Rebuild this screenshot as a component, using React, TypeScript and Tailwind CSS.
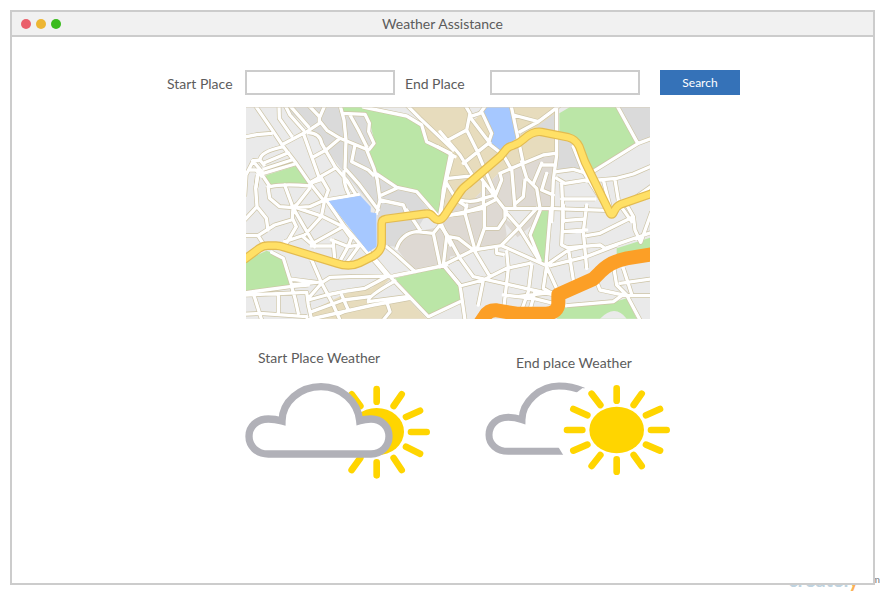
const SHEETS = {
  northWest: 'translate(-18 -21)',
  northEast: 'translate(582 -21)',
  west: 'translate(-9 204)',
  southWest: 'translate(-18 294)',
  southEast: 'translate(582 294)',
};

type Area = { at: string; fill: string; d: string };

const GREEN = '#bbe6a7';
const BLUE = '#a6c8ff';
const SAND = '#e7dcbd';
const GREY = '#dadada';
const STONE = '#ded9d3';
const LAND = '#eaeaea';

const areas: Area[] = [
  { at: SHEETS.northWest, fill: GREY, d: 'M130 21H302L380 40L405 130L387 155L410 212L520 270L570 335L430 360L310 215L260 150L215 90Z' },
  { at: SHEETS.northWest, fill: SAND, d: 'M505 21H640V360H600V345L630 162L562 125L550 60Z' },
  { at: SHEETS.northWest, fill: GREEN, d: 'M302 21H370L500 48L545 75L560 127L632 162L605 260L600 345L580 325L530 275L470 262L405 210L387 155L405 130L385 50L375 40L308 35Z' },
  { at: SHEETS.northWest, fill: GREEN, d: 'M72 237L80 225L170 197L210 257L95 255L85 258Z' },
  { at: SHEETS.northEast, fill: SAND, d: 'M0 21H350V160L180 215L100 300L0 370Z' },
  { at: SHEETS.northEast, fill: STONE, d: 'M180 215L345 160L340 320L200 440L0 475V340L100 300Z' },
  { at: SHEETS.northEast, fill: LAND, d: 'M90 21H135L120 45L90 70Z' },
  { at: SHEETS.northEast, fill: BLUE, d: 'M137 21H210L228 115L180 160L147 135L155 100L127 45Z' },
  { at: SHEETS.northEast, fill: GREY, d: 'M290 80L352 35V215L430 215L400 130L300 95Z' },
  { at: SHEETS.northEast, fill: GREEN, d: 'M358 40L390 21H527L588 128L455 215L420 140L400 110L358 95Z' },
  { at: SHEETS.northEast, fill: GREY, d: 'M540 21H630V118L595 125Z' },
  { at: SHEETS.northEast, fill: GREEN, d: 'M0 150L38 165L10 290L0 345Z' },
  { at: SHEETS.southWest, fill: GREY, d: 'M412 20L500 5L560 25L530 75L470 125L437 122L412 130Z' },
  { at: SHEETS.southWest, fill: STONE, d: 'M470 130Q485 85 530 80L600 65L630 30V180L520 198Z' },
  { at: SHEETS.southWest, fill: GREEN, d: 'M560 0H608V28L595 35L570 20Z' },
  { at: SHEETS.southWest, fill: GREEN, d: 'M18 165L80 137L125 155L150 240L50 258L18 260Z' },
  { at: SHEETS.southWest, fill: SAND, d: 'M210 318L320 265L395 250L425 223H450L385 280V292L500 278L560 341H210Z' },
  { at: SHEETS.southWest, fill: GREEN, d: 'M465 220L610 185L660 245V285L565 330Z' },
  { at: SHEETS.southEast, fill: LAND, d: 'M195 55L290 160L185 120L200 90ZM200 45L240 70L290 15H200Z' },
  { at: SHEETS.southEast, fill: GREEN, d: 'M300 17H328L318 178L300 165L270 95Z' },
  { at: SHEETS.southEast, fill: GREEN, d: 'M530 130L630 98V140L530 158Z' },
  { at: SHEETS.southEast, fill: GREEN, d: 'M370 308L520 292L560 280L590 341H350Z' },
  { at: SHEETS.southEast, fill: LAND, d: 'M480 341Q525 295 560 341Z' },
];

const roads = [
  {
    at: SHEETS.northWest,
    d: `M45 15L100 95L130 140L165 185L210 250L250 300M117 15L118 55L155 108M135 15L150 45L190 90
M10 112L50 104L95 100M148 15L205 80M205 15L238 50V70L205 92L130 132M255 15L240 50M238 62L262 92L300 115L385 150
M300 15L312 60L318 120L315 205L355 250L415 330M308 40L375 43L388 70L386 95L402 130L388 148M330 45L355 90L380 140
M190 100L215 170L240 240M205 98Q240 100 245 130L262 160L285 200L320 240L345 280M300 115L258 150L218 172
M345 135L335 185L385 210L400 225M380 150L402 205L412 240L420 300L410 340M285 205L215 245
M130 140Q60 155 60 180L40 182L18 225L14 290M60 180L72 195M70 190L145 158M72 207L155 180M38 182L70 220L165 192
M65 228L48 210L30 210M70 230L90 260Q130 250 210 258M52 225L48 262M245 235L265 270L255 298M210 250L245 238
M312 215Q310 250 325 280M410 222L470 262L530 275L600 355M425 285L470 265M420 300L490 315L500 340M258 300L355 284
M370 21L500 48L545 75L560 125L632 160M500 15L540 55L640 150M632 160L610 270L602 350`,
  },
  {
    at: SHEETS.northEast,
    d: `M75 15L90 40L80 90L25 120M0 95L60 165L100 230M90 50L120 40L138 15M95 58L150 130M127 40L155 100L145 130L190 165L215 210
M80 90L110 150L165 280M145 130L70 190M25 235L120 225M38 170L20 235L0 340M-8 140L45 170M213 15L235 120L250 190
M220 45L295 65L335 35L360 15M350 15V165L340 240L335 365M240 95L295 65M180 220L250 190L310 165L345 160
M245 185L260 235L290 265L300 325M215 205L225 325M255 240L250 290L225 312M180 220L185 240L165 290M130 245V320
M120 230L165 290M60 300Q100 310 130 295L165 285M305 190L280 250M305 195L340 195M320 220L305 270L340 285M20 250L50 300L80 320
M30 345L80 335L130 318L165 300M165 290L200 335M350 215L400 208L440 220
M350 235L375 250L440 240M365 250L370 365M365 297H465M455 217L595 130L635 115M530 15L592 128
M440 243L530 235L580 222L635 198M490 240L510 320M525 240L535 300M400 140L430 215L510 340M635 258L590 290M540 315L575 365`,
  },
  {
    at: SHEETS.west,
    d: `M45 0L38 40L42 95L70 130L75 165M42 95L5 135M5 182H45L60 205M45 182L95 150L145 135M75 35L80 70L110 95L150 98
M125 30L150 98M200 40L165 85L150 98L148 130L160 155L130 205M150 98L180 150L215 210M160 98L240 125L300 155
M155 98L200 95L245 75M245 75L235 125L185 180L125 200M250 75L305 155L375 235L430 300M300 155L210 205
M180 185L215 215M205 213H270M270 195L275 250M265 195L315 215L350 210M300 155L325 190L315 215L290 260M350 210L310 265`,
  },
  {
    at: SHEETS.southWest,
    d: `M500 15L540 75M95 142L130 160L155 240L250 230L270 217L330 215L460 213L620 180
M150 222L230 232M215 165L245 235L280 300L300 345M10 264L150 245L205 240M205 280L240 240M155 245L165 280L175 325
M40 265L65 345M115 268V325M10 328L60 325L200 335M18 270L200 262L205 300L215 345M205 285L260 270L320 258L375 250L440 215
M215 320L310 285L390 275M305 270L325 315L300 325M385 290L500 275M200 345L400 300L510 280M440 290L450 320L430 345
M385 290Q380 275 465 228M450 215L565 335L660 290M440 125L470 150L525 200M470 130Q485 85 530 80L580 85L600 180
M600 60L580 85M605 60L632 120M610 180L660 240M385 138L450 215`,
  },
  {
    at: SHEETS.southEast,
    d: `M20 95L10 180L60 240L75 345M0 60L25 95L55 100L100 135M25 95L60 160M30 30L75 25L80 0M75 25L105 135M80 20L130 10M133 0V70L110 135
M133 70L175 70L195 40V10M200 25L235 65L300 170M290 10L235 70L185 120M0 185L100 135L185 122L320 182L310 250L345 270
M195 10L340 11L500 16M300 17L270 90L300 165M332 10L318 180M60 243L130 225L200 190L270 175M60 160L100 215L345 270
M105 140L150 215M200 140L205 190L190 320M115 300L130 225M275 180L265 260L245 315M190 270L280 280L340 295M285 260L270 315
M170 130V145L190 148M320 185L352 255M320 180L385 135L430 125M370 0L365 120L385 130L400 225M440 0L430 80L440 190M370 80L440 75
M370 47L435 42M385 128L480 120L495 130L635 82M330 182L440 155L530 120M440 92L480 85L580 35M560 0L580 35L585 75L602 112L635 20
M380 302L520 290L545 272L632 272M470 230L480 255L550 270M520 180L530 240L560 270L600 345M550 190L575 268M540 235L632 222M230 275L340 262`,
  },
];

const lake = 'M257 78L352 62L383 95V112L400 115L401 215L376 231L305 140Z';
const freeway =
  'M-6 458L40 424Q52 416 66 416H90Q100 416 115 421L272 469Q310 482 340 468L382 447Q407 432 407 408V350Q407 338 419 336L540 320Q552 318 560 328Q580 352 598 322L640 258Q648 244 665 232L762 149L782 125Q790 118 802 115Q818 110 832 97Q862 70 887 75L967 91Q990 97 1000 119L1017 165L1090 314Q1097 330 1104 314Q1110 298 1124 292L1225 257';
const motorway = 'M698 655L716 628Q728 608 752 610L812 620H902Q937 616 937 588V563L1042 516L1062 496Q1092 464 1142 454L1225 441';

function CityMap() {
  return (
    <svg viewBox="0 0 1212 636" className="block w-full" role="img" aria-label="Route map" fill="none" strokeLinejoin="round">
      <rect width="1212" height="636" fill={LAND} />
      {areas.map((a) => (
        <path key={a.at + a.d} transform={a.at} fill={a.fill} d={a.d} />
      ))}
      {roads.map((r) => (
        <path key={r.at} transform={r.at} d={r.d} stroke="#cdc4a6" strokeWidth="14" />
      ))}
      {roads.map((r) => (
        <path key={r.at} transform={r.at} d={r.d} stroke="#fff" strokeWidth="10" strokeLinecap="round" />
      ))}
      <path transform={SHEETS.west} d={lake} fill={BLUE} />
      <path d={freeway} stroke="#e3bb50" strokeWidth="26" />
      <path d={freeway} stroke="#ffe066" strokeWidth="19" />
      <path d={motorway} stroke="#fc9f26" strokeWidth="42" />
      <path d="M0 1H1212" stroke="#d6d0c0" strokeWidth="2" />
    </svg>
  );
}

function CloudOverSun() {
  return (
    <svg viewBox="30 123 555 297" className="block w-[185px]" role="img" aria-label="Mostly cloudy" fill="none">
      <ellipse cx="425" cy="275" rx="82" ry="71" fill="#ffd500" />
      <path
        stroke="#ffd500"
        strokeWidth="20"
        strokeLinecap="round"
        d="M425 147V185M500 163L476 198M555 212L513 231M528 276H575M513 320L555 341M476 354L500 390M425 367V406M376 354L350 390M350 163L376 198"
      />
      <path
        fill="#fff"
        stroke="#b1b1b8"
        strokeWidth="22"
        strokeMiterlimit="10"
        d="M141 243Q120 237 100 237C65 237 42 260 42 289C42 318 65 342 100 342H408C440 342 462 318 462 289C462 260 440 237 408 237Q390 237 374 242C368 185 320 140 258 140C195 140 142 185 141 243Z"
      />
    </svg>
  );
}

function SunWithCloud() {
  return (
    <svg viewBox="30 123 555 297" className="block w-[185px]" role="img" aria-label="Mostly sunny" fill="none">
      <path
        stroke="#b1b1b8"
        strokeWidth="21"
        strokeMiterlimit="10"
        d="M275 334H100C65 334 42 312 42 285C42 255 65 232 100 232Q120 232 141 239C142 185 195 138 252 138Q290 138 325 153"
      />
      <path fill="#fff" d="M323 144L303 159L320 180L345 150ZM250 321L266 347H290V321Z" />
      <ellipse cx="425" cy="270" rx="82" ry="70" fill="#ffd500" />
      <path
        stroke="#ffd500"
        strokeWidth="20"
        strokeLinecap="round"
        d="M425 145V182M500 161L476 195M555 207L513 226M528 270H575M513 314L555 332M476 345L500 378M425 358V395M376 345L350 378M337 314L295 332M322 270H276M337 226L295 207M376 195L350 161"
      />
    </svg>
  );
}

export default function App() {
  return (
    <div className="relative flex min-h-screen bg-white p-[10px] font-['Lato',sans-serif] text-sm text-[#5c5c5c]">
      <div className="absolute right-[5px] bottom-1 flex items-start" aria-hidden="true">
        <span className="text-xl leading-6 font-bold text-[#bfd3e0]">
          createl<span className="text-[#fbb154]">y</span>
        </span>
        <span className="text-[10px] leading-6 text-[#777]">.com</span>
      </div>
      <main className="relative flex-1 border-2 border-[#ccc] bg-white">
        <header className="relative flex h-[25px] items-center justify-center border-b-2 border-[#ccc] bg-[#f1f1f1]">
          <div className="absolute left-[9px] flex gap-[5px]">
            <span className="size-[10px] rounded-full bg-[#ea5f6b]" />
            <span className="size-[10px] rounded-full bg-[#edb633]" />
            <span className="size-[10px] rounded-full bg-[#3abb1c]" />
          </div>
          <h1>Weather Assistance</h1>
        </header>

        <div className="mx-auto w-[595px] pt-[33px] pl-[22px]">
          <form className="flex items-center" onSubmit={(e) => e.preventDefault()}>
            <label htmlFor="start" className="w-[78px] pt-[2px]">Start Place</label>
            <input id="start" type="text" className="h-[25px] w-[150px] border-2 border-[#ccc] bg-white px-1 outline-none" />
            <label htmlFor="end" className="ml-[10px] w-[85px] pt-[2px]">End Place</label>
            <input id="end" type="text" className="h-[25px] w-[150px] border-2 border-[#ccc] bg-white px-1 outline-none" />
            <button type="submit" className="ml-5 h-[25px] w-20 bg-[#3572b8] text-xs text-white">Search</button>
          </form>

          <div className="mt-3 ml-[79px] w-[404px]">
            <CityMap />
          </div>

          <div className="mt-7 ml-[78px] flex gap-[55px]">
            <section>
              <h2 className="pb-3 pl-[13px] leading-[22px]">Start Place Weather</h2>
              <CloudOverSun />
            </section>
            <section className="pt-[5px]">
              <h2 className="pb-[7px] pl-[31px] leading-[22px]">End place Weather</h2>
              <SunWithCloud />
            </section>
          </div>
        </div>
      </main>
    </div>
  );
}
